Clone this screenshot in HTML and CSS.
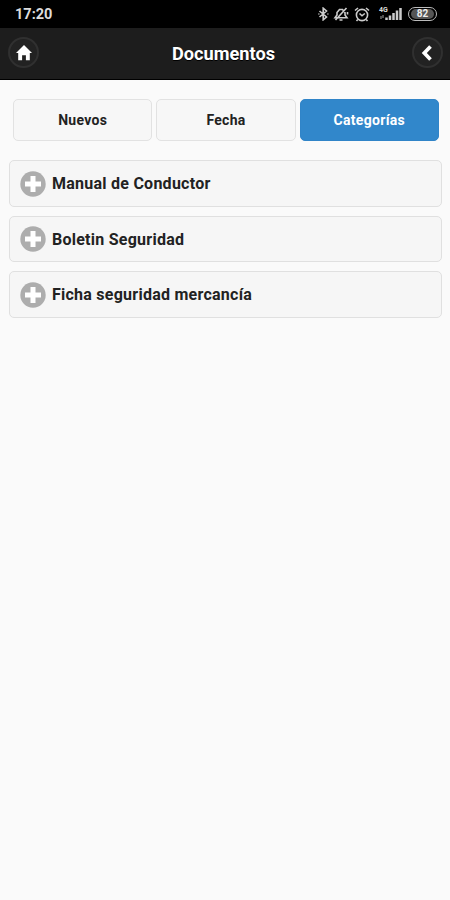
FILE: index.html
```html
<!doctype html>
<html lang="es">
  <head>
    <meta charset="UTF-8" />
    <meta name="viewport" content="width=device-width, initial-scale=1.0" />
    <title>Documentos</title>
    <link rel="stylesheet" href="styles.css">
  </head>
  <body>
    <div class="status-bar">
      <span class="clock">17:20</span>
      <div class="status-icons">
        <svg class="bluetooth" width="11" height="14" viewBox="0 0 11 14">
          <path d="M1.5 4 8.5 10 5.2 12.8V1.2L8.5 4 1.5 10M.4 7h1M9.4 7h1" />
        </svg>
        <svg class="muted" width="16" height="14" viewBox="0 0 16 14">
          <path d="M2 10.8 4 8V5.500L6.500 2.500h3L12 5.500V8l2 2.800zM6.500 13h3M13.500 1 2.500 13M14.500 5v2.500" />
        </svg>
        <svg class="alarm" width="16" height="15" viewBox="0 0 16 15">
          <circle cx="8" cy="8" r="5.6" />
          <path d="M1 3.5 4 1M15 3.5 12 1M5.5 6.5 8 8.8l2.8-2.3M3.8 12.5 2.5 14M12.2 12.5l1.3 1.5" />
        </svg>
        <div class="network">
          <span class="network-type">4G</span>
          <svg width="24" height="14" viewBox="0 0 24 14">
            <path class="data" d="M2 12V9M4 8v3" />
            <path class="bars" d="M7.5 13v-2.5M11 13V8.5M14.5 13V6M18 13V3.5M21.5 13V1" />
          </svg>
        </div>
        <div class="battery"><span>82</span></div>
      </div>
    </div>

    <header class="header">
      <a class="round-btn" href="#" aria-label="Inicio">
        <svg width="18" height="18" viewBox="0 0 18 18">
          <path class="home" d="M9 1 17 9h-2.2v7.3h-3.9v-5H7.1v5H3.2V9H1z" />
        </svg>
      </a>
      <h1>Documentos</h1>
      <a class="round-btn" href="#" aria-label="Volver">
        <svg width="18" height="18" viewBox="0 0 18 18">
          <path class="back" d="M12.5 2.5 6.3 9l6.2 6.5" />
        </svg>
      </a>
    </header>

    <nav class="tabs">
      <a class="tab" href="#">Nuevos</a>
      <a class="tab" href="#">Fecha</a>
      <a class="tab active" href="#">Categorías</a>
    </nav>

    <main class="categories">
      <div class="category">
        <svg class="plus" width="26" height="26" viewBox="0 0 26 26">
          <circle cx="13" cy="13" r="12.7" />
          <path d="M13 5v16M5 13h16" />
        </svg>
        <span>Manual de Conductor</span>
      </div>
      <div class="category">
        <svg class="plus" width="26" height="26" viewBox="0 0 26 26">
          <circle cx="13" cy="13" r="12.7" />
          <path d="M13 5v16M5 13h16" />
        </svg>
        <span>Boletin Seguridad</span>
      </div>
      <div class="category">
        <svg class="plus" width="26" height="26" viewBox="0 0 26 26">
          <circle cx="13" cy="13" r="12.7" />
          <path d="M13 5v16M5 13h16" />
        </svg>
        <span>Ficha seguridad mercancía</span>
      </div>
    </main>
  </body>
</html>
```
FILE: styles.css
```css
* {
  box-sizing: border-box;
}
body {
  margin: 0;
  min-height: 100vh;
  background-color: #fafafa;
  color: #222;
  font-family: Roboto, "Liberation Sans", sans-serif;
  font-weight: 700;
}
a {
  color: inherit;
  text-decoration: none;
}
svg {
  display: block;
  flex: none;
}

/* phone status bar */
.status-bar {
  display: flex;
  align-items: center;
  justify-content: space-between;
  height: 28px;
  padding: 0 13px 0 15px;
  background-color: #000;
  color: #ddd;
}
.clock {
  padding-top: 2px;
  font-size: 14.5px;
  line-height: 28px;
}
.status-icons {
  display: flex;
  align-items: center;
}
.status-icons svg {
  fill: none;
  stroke: #ccc;
  stroke-width: 1.6;
}
.muted {
  margin-left: 4px;
}
.alarm {
  margin-left: 5px;
}
.network {
  position: relative;
  margin-left: 9px;
}
.network-type {
  position: absolute;
  top: -1px;
  left: 0;
  font-size: 7px;
  line-height: 8px;
}
.network .data {
  stroke: #666;
}
.network .bars {
  stroke-width: 2.5;
}
.battery {
  width: 29px;
  height: 14px;
  margin-left: 5px;
  padding: 1px 2px;
  border: 1.5px solid #bbb;
  border-radius: 7px;
}
.battery span {
  display: block;
  height: 10px;
  border-radius: 5px;
  background-color: #555;
  color: #eee;
  font-size: 10px;
  line-height: 10px;
  text-align: center;
}

.header {
  display: flex;
  align-items: center;
  justify-content: space-between;
  height: 52px;
  padding: 0 7px 2px 8px;
  border-bottom: 1px solid #000;
  background-color: #1d1d1d;
  color: #fff;
}
.header h1 {
  margin: 0;
  padding: 2px 4px 0 0;
  font-size: 18.2px;
  text-shadow: 0 1px 0 #000;
}
.round-btn {
  display: flex;
  align-items: center;
  justify-content: center;
  width: 31px;
  height: 31px;
  border: 2px solid #303030;
  border-radius: 50%;
  background-color: #222;
}
.home {
  fill: #fff;
}
.back {
  fill: none;
  stroke: #fff;
  stroke-width: 3.7;
}

.tabs {
  display: flex;
  gap: 4px;
  padding: 19px 11px 0 13px;
}
.tab {
  flex: 1;
  height: 42px;
  border: 1px solid #e2e2e2;
  border-radius: 5px;
  background-color: #f7f7f7;
  font-size: 14px;
  letter-spacing: 0.3px;
  line-height: 40px;
  text-align: center;
}
.tab.active {
  border-color: #3084c8;
  background-color: #3187cb;
  color: #fff;
}

.categories {
  display: flex;
  flex-direction: column;
  gap: 9px;
  padding: 19.4px 8px 0 9px;
}
.category {
  display: flex;
  align-items: center;
  gap: 6px;
  height: 46.5px;
  padding-left: 10px;
  border: 1px solid #e0e0e0;
  border-radius: 5px;
  background-color: #f6f6f6;
  font-size: 16px;
  letter-spacing: 0.25px;
}
.plus circle {
  fill: #adadad;
}
.plus path {
  fill: none;
  stroke: #fff;
  stroke-width: 5;
}
```
